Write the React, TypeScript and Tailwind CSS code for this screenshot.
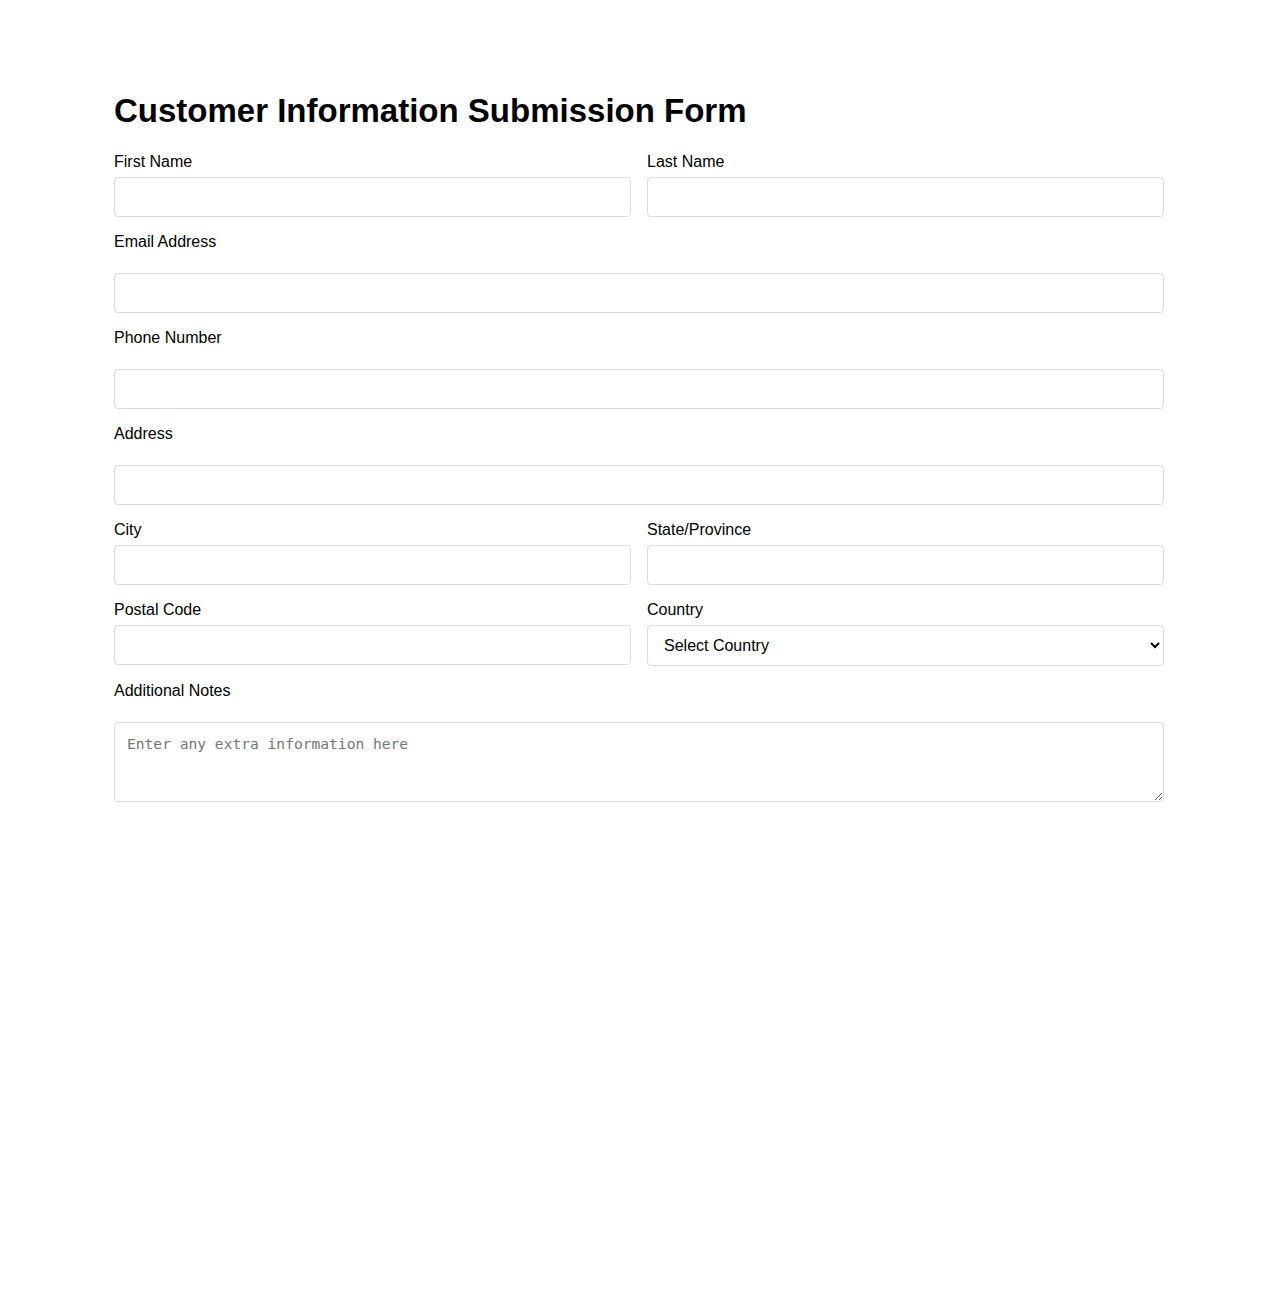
import React from "react";

const inputCls =
  "block w-full h-10 border border-[#dcdcdc] rounded-[4px] bg-white px-3 text-base outline-none";

function Field({ label, wide, children }: { label: string; wide?: boolean; children?: React.ReactNode }) {
  return (
    <div>
      <label className={`block text-base leading-[20px] text-black ${wide ? "mb-[21px]" : "mb-[5px]"}`}>
        {label}
      </label>
      {children ?? <input type="text" className={inputCls} />}
    </div>
  );
}

export default function App() {
  return (
    <div className="min-h-[1300px] bg-white font-['Liberation_Sans',Arial,sans-serif] text-black">
      <div className="mx-auto w-[1050px] pt-[92px]">
        <h1 className="text-[33px] leading-[38px] font-bold mb-[22px]">
          Customer Information Submission Form
        </h1>

        <div className="flex flex-col gap-[15px]">
          <div className="grid grid-cols-2 gap-4">
            <Field label="First Name" />
            <Field label="Last Name" />
          </div>
          <Field label="Email Address" wide>
            <input type="email" className={inputCls} />
          </Field>
          <Field label="Phone Number" wide>
            <input type="tel" className={inputCls} />
          </Field>
          <Field label="Address" wide />
          <div className="grid grid-cols-2 gap-4">
            <Field label="City" />
            <Field label="State/Province" />
          </div>
          <div className="grid grid-cols-2 gap-4">
            <Field label="Postal Code" />
            <Field label="Country">
              <select className="block w-full h-[41px] border border-[#dcdcdc] rounded-[4px] bg-white px-3 text-base outline-none">
                <option>Select Country</option>
                <option>United States</option>
                <option>Canada</option>
                <option>United Kingdom</option>
              </select>
            </Field>
          </div>
          <Field label="Additional Notes" wide>
            <textarea
              placeholder="Enter any extra information here"
              className="block w-full h-20 border border-[#dcdcdc] rounded-[4px] bg-white px-3 py-3 font-['DejaVu_Sans_Mono',monospace] text-[14.6px] leading-[17px] placeholder:text-[#757575] outline-none"
            />
          </Field>
        </div>
      </div>
    </div>
  );
}
